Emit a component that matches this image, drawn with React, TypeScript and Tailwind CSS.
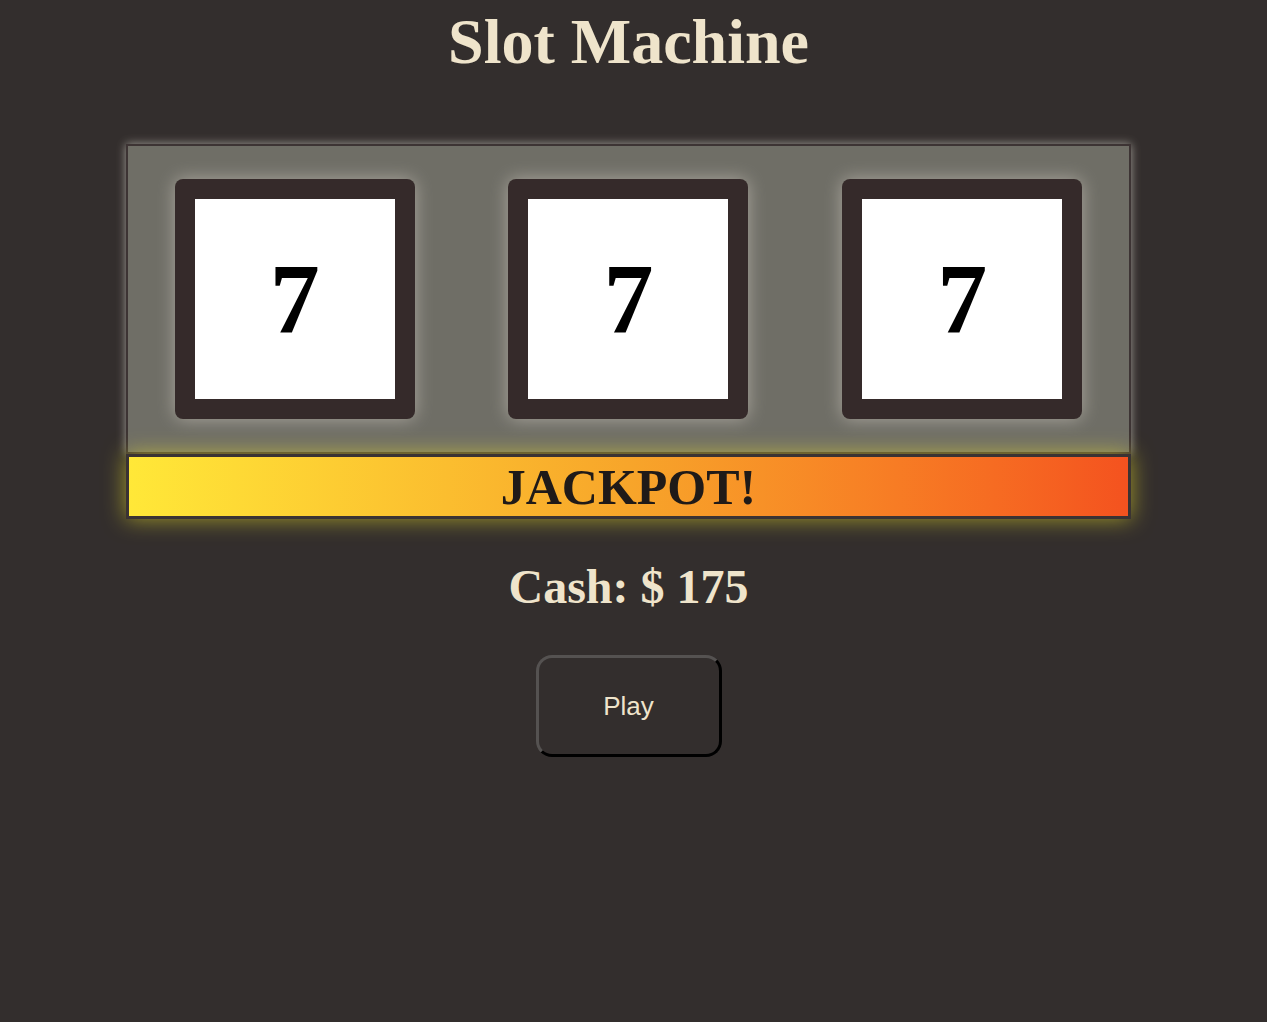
const reels = ["7", "7", "7"];

const serif = "font-['Liberation_Serif',_'Times_New_Roman',_serif]";

const App = () => {
  return (
    <div className="min-h-[1022px] bg-[#332e2d]">
      <div className={`flex w-[1257px] flex-col items-center ${serif}`}>
        <h1 className="mt-[5px] text-[64px] font-bold leading-[74px] text-[#efe4cb]">
          Slot Machine
        </h1>

        <div className="mt-[65px] w-[1005px]">
          <div className="flex h-[310px] items-center justify-around border-2 border-[#3d3434] bg-[#6f6e66] shadow-[0_0_9px_#a09c95]">
            {reels.map((symbol, i) => (
              <div
                key={i}
                className="flex h-[240px] w-[240px] items-center justify-center rounded-[8px] bg-[#352a2a] shadow-[0_0_18px_#aaa69e]"
              >
                <div className="flex h-[200px] w-[200px] items-center justify-center bg-white">
                  <span className="text-[100px] font-bold leading-none text-black">
                    {symbol}
                  </span>
                </div>
              </div>
            ))}
          </div>

          <div className="flex h-[65px] items-center justify-center border-[3px] border-[#3a3333] bg-gradient-to-r from-[#ffe838] via-[#f7a52a] to-[#f4521f] shadow-[0_0_22px_rgba(235,225,40,0.6)]">
            <span className="text-[50px] font-bold leading-none text-[#1f1a18]">
              JACKPOT!
            </span>
          </div>
        </div>

        <p className="mt-[40px] text-[48px] font-bold leading-[56px] text-[#efe4cb]">
          Cash: $ 175
        </p>

        <button className="mt-[40px] h-[102px] w-[186px] rounded-[16px] border-[3px] border-t-[#555251] border-l-[#555251] border-b-black border-r-black bg-[#332e2d] font-['Liberation_Sans',_Arial,_sans-serif] text-[26px] text-[#efe4cb]">
          Play
        </button>
      </div>
    </div>
  );
};

export default App;
